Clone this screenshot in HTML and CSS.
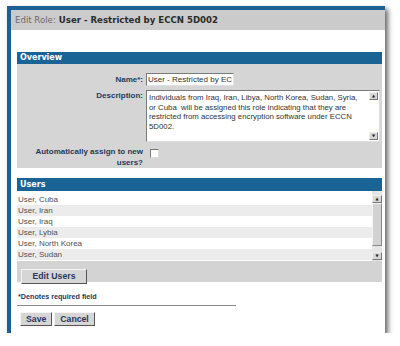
FILE: index.html
```html
<!DOCTYPE html>
<html>
<head>
    <meta charset="UTF-8">
    <title>Edit Role</title>
    <link rel="stylesheet" href="styles.css">
</head>
<body>
    <div class="dialog">
        <div class="title-bar">
            <span class="title-label">Edit Role:</span>
            <span class="title-name">User - Restricted by ECCN 5D002</span>
        </div>

        <div class="content">
            <div class="section-head">Overview</div>
            <div class="overview">
                <div class="label name-label">Name*:</div>
                <div class="field">
                    <input class="name-input" type="text" value="User - Restricted by ECCN 5D002">
                </div>

                <div class="label">Description:</div>
                <div class="field">
                    <div class="textarea">
                        <div class="textarea-text">Individuals from Iraq, Iran, Libya, North Korea, Sudan, Syria, or Cuba&nbsp; will be assigned this role indicating that they are restricted from accessing encryption software under ECCN 5D002.</div>
                        <div class="scrollbar">
                            <span class="arrow">▲</span>
                            <span class="arrow">▼</span>
                        </div>
                    </div>
                </div>

                <div class="label auto-label">Automatically assign to new users?</div>
                <div class="field">
                    <span class="checkbox"></span>
                </div>
            </div>

            <div class="section-head users-head">Users</div>
            <div class="user-list">
                <div class="rows">
                    <div class="row">User, Cuba</div>
                    <div class="row">User, Iran</div>
                    <div class="row">User, Iraq</div>
                    <div class="row">User, Lybia</div>
                    <div class="row">User, North Korea</div>
                    <div class="row">User, Sudan</div>
                </div>
                <div class="scrollbar list-scroll">
                    <span class="arrow">▲</span>
                    <span class="thumb"></span>
                    <span class="arrow">▼</span>
                </div>
            </div>
            <div class="list-actions">
                <button class="btn edit-btn">Edit Users</button>
            </div>

            <div class="required-note">*Denotes required field</div>
            <div class="divider"></div>

            <div class="actions">
                <button class="btn">Save</button>
                <button class="btn">Cancel</button>
            </div>
        </div>
    </div>
</body>
</html>
```

FILE: styles.css
```css
body {
    margin: 0;
    background: #ffffff;
    font-family: 'DejaVu Sans', Verdana, sans-serif;
}
.dialog {
    margin: 6px 0 0 7px;
    width: 374px;
    height: 323px;
    background: #ffffff;
    border-left: 4px solid #1d6093;
    border-top: 4px solid #1d6093;
    box-shadow: 3px 3px 5px rgba(0,0,0,0.6);
}
.title-bar {
    height: 20px;
    background: #cbcbcb;
    padding-left: 4px;
    display: flex;
    align-items: center;
    gap: 3px;
    font-size: 8.6px;
}
.title-label {
    color: #6b6b6b;
}
.title-name {
    color: #2b2b2b;
    font-weight: bold;
}
.content {
    padding: 22px 3px 0 6px;
}
.section-head {
    height: 12px;
    line-height: 12px;
    background: #1a6495;
    color: #ffffff;
    font-size: 8px;
    font-weight: bold;
    padding-left: 3px;
}
.overview {
    background: #d5d5d5;
    display: grid;
    grid-template-columns: 126px 1fr;
    column-gap: 3px;
    row-gap: 4px;
    padding: 9px 3px 0 0;
}
.label {
    text-align: right;
    font-family: 'Liberation Sans', Arial, sans-serif;
    font-size: 8px;
    font-weight: bold;
    color: #26385c;
    line-height: 12px;
}
.name-label {
    line-height: 13px;
}
.auto-label {
    line-height: 11px;
}
.name-input {
    display: block;
    width: 88px;
    height: 13px;
    box-sizing: border-box;
    border: 1px solid #7a7a7a;
    border-right-color: #e0e0e0;
    border-bottom-color: #e0e0e0;
    padding: 0 1px;
    font-family: 'Liberation Sans', Arial, sans-serif;
    font-size: 8px;
    color: #333;
    background: #ffffff;
}
.textarea {
    height: 52px;
    box-sizing: border-box;
    width: 234px;
    background: #ffffff;
    border: 1px solid #7a7a7a;
    border-right-color: #e0e0e0;
    border-bottom-color: #e0e0e0;
    display: flex;
}
.textarea-text {
    flex: 1;
    font-family: 'Liberation Sans', Arial, sans-serif;
    font-size: 7.8px;
    line-height: 9.6px;
    color: #333;
    padding: 2px 9px 0 2px;
}
.scrollbar {
    width: 9px;
    display: flex;
    flex-direction: column;
    justify-content: space-between;
    padding: 1px 1px 1px 0;
    background: #ffffff;
}
.arrow {
    display: block;
    height: 8px;
    background: #d8d8d8;
    border: 1px solid #f0f0f0;
    border-right-color: #777;
    border-bottom-color: #777;
    box-sizing: border-box;
    font-size: 4px;
    line-height: 6px;
    text-align: center;
    color: #222;
}
.checkbox {
    display: block;
    width: 7px;
    height: 7px;
    margin: 3px 0 0 4px;
    background: #ffffff;
    border: 1px solid #777;
    border-right-color: #ddd;
    border-bottom-color: #ddd;
}
.users-head {
    margin-top: 10px;
    height: 13px;
    line-height: 13px;
}
.user-list {
    display: flex;
    background: #ffffff;
    height: 70px;
}
.rows {
    flex: 1;
    padding-top: 3px;
}
.row {
    height: 11px;
    line-height: 11px;
    font-family: 'Liberation Sans', Arial, sans-serif;
    font-size: 8px;
    color: #505050;
    padding-left: 1px;
}
.row:nth-child(even) {
    background: #ececec;
}
.list-scroll {
    width: 10px;
    padding: 4px 0 1px 0;
    background: #e6e6e6;
}
.thumb {
    flex: 1;
    margin-bottom: 6px;
    background: #d2d2d2;
    border: 1px solid #f2f2f2;
    border-right-color: #888;
    border-bottom-color: #888;
}
.list-actions {
    background: #d3d3d3;
    padding: 3px 4px 3px 4px;
    height: 15px;
}
.btn {
    height: 15px;
    padding: 0 5px;
    font-family: 'Liberation Sans', Arial, sans-serif;
    font-size: 8.7px;
    font-weight: bold;
    color: #26385c;
    background: #d6d6d6;
    border: 1px solid #f4f4f4;
    border-right-color: #555;
    border-bottom-color: #555;
}
.edit-btn {
    width: 66px;
}
.required-note {
    margin-top: 10px;
    font-family: 'Liberation Sans', Arial, sans-serif;
    font-size: 7.2px;
    line-height: 9px;
    font-weight: bold;
    color: #26385c;
    padding-left: 1px;
}
.divider {
    width: 219px;
    height: 1px;
    background: #8a8a8a;
    margin-top: 4px;
}
.actions {
    display: flex;
    gap: 2px;
    padding: 6px 0 0 3px;
}
.actions .btn {
    height: 14px;
}
```
